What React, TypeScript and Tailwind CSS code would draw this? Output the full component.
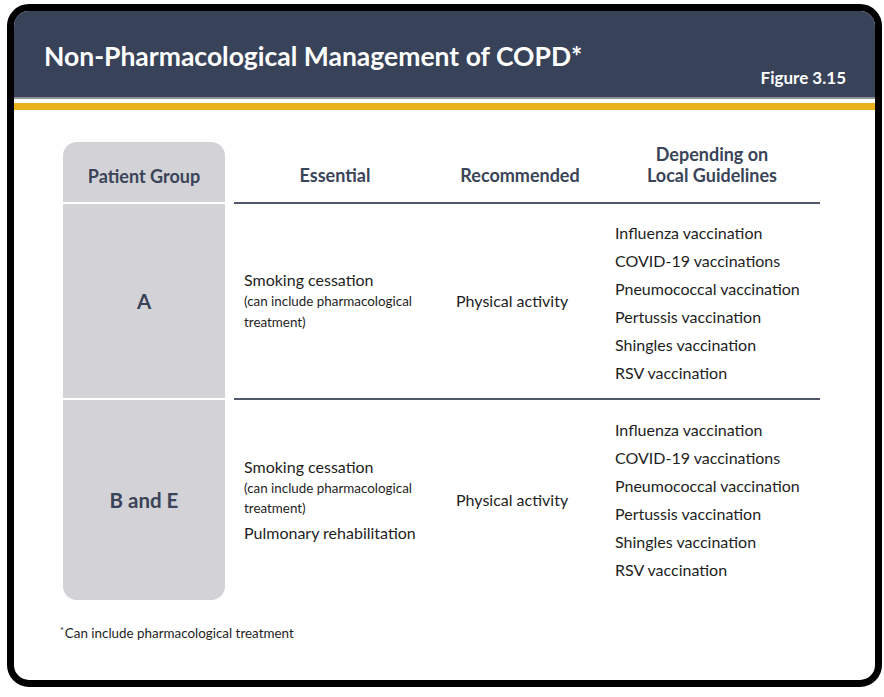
const vaccines = [
  "Influenza vaccination",
  "COVID-19 vaccinations",
  "Pneumococcal vaccination",
  "Pertussis vaccination",
  "Shingles vaccination",
  "RSV vaccination",
];

function VaccineList() {
  return (
    <ul className="flex flex-col gap-[6px]">
      {vaccines.map((v) => (
        <li key={v} className="leading-[22px]">
          {v}
        </li>
      ))}
    </ul>
  );
}

export default function App() {
  return (
    <div
      className="w-[884px] h-[697px] bg-white pt-[4px] pl-[7px]"
      style={{ fontFamily: "Lato, 'Open Sans', sans-serif" }}
    >
      <div className="w-[875px] h-[683px] border-[7px] border-black rounded-[22px] overflow-hidden bg-white flex flex-col">
        <div className="h-[86px] bg-[#384259] flex items-start justify-between pl-[30px] pr-[29px] shrink-0">
          <h1 className="text-white font-bold text-[26.5px] leading-[32px] mt-[29px]">
            Non-Pharmacological Management of COPD*
          </h1>
          <span className="text-white font-bold text-[17px] leading-[20px] mt-[57px]">
            Figure 3.15
          </span>
        </div>
        <div className="h-[2px] bg-[#8d929c] shrink-0" />
        <div className="h-[4px] bg-white shrink-0" />
        <div className="h-[7px] bg-[#e9b11c] shrink-0" />

        <div className="pl-[49px] pt-[32px] text-[#1e1e1e]">
          {/* header row */}
          <div className="flex">
            <div className="w-[162px] h-[62px] bg-[#d3d3d7] rounded-t-[14px] border-b-2 border-white flex items-end justify-center pb-[15px] font-bold text-[18px] leading-[21px] text-[#3a4459]">
              Patient Group
            </div>
            <div className="ml-[9px] w-[586px] flex border-b-2 border-[#50576a] font-bold text-[18px] leading-[21px] text-[#3a4459]">
              <div className="w-[202px] flex items-end justify-center pb-[16px]">Essential</div>
              <div className="w-[168px] flex items-end justify-center pb-[16px]">Recommended</div>
              <div className="w-[216px] flex items-end justify-center pb-[16px] text-center">
                Depending on
                <br />
                Local Guidelines
              </div>
            </div>
          </div>

          {/* group A */}
          <div className="flex">
            <div className="w-[162px] h-[196px] bg-[#d3d3d7] border-b-2 border-white flex items-center justify-center font-bold text-[20.5px] text-[#3a4459]">
              A
            </div>
            <div className="ml-[9px] w-[586px] flex items-center border-b-2 border-[#50576a] text-[16px]">
              <div className="w-[202px] pl-[10px]">
                <p className="leading-[22px]">Smoking cessation</p>
                <p className="text-[13.4px] leading-[21px]">
                  (can include pharmacological
                  <br />
                  treatment)
                </p>
              </div>
              <div className="w-[168px] pl-[20px]">Physical activity</div>
              <div className="w-[216px] pl-[11px] pt-[4px]">
                <VaccineList />
              </div>
            </div>
          </div>

          {/* group B and E */}
          <div className="flex">
            <div className="w-[162px] h-[200px] bg-[#d3d3d7] rounded-b-[14px] flex items-center justify-center font-bold text-[20.5px] text-[#3a4459]">
              B and E
            </div>
            <div className="ml-[9px] w-[586px] flex items-center text-[16px]">
              <div className="w-[202px] pl-[10px]">
                <p className="leading-[22px]">Smoking cessation</p>
                <p className="text-[13.4px] leading-[20px]">
                  (can include pharmacological
                  <br />
                  treatment)
                </p>
                <p className="leading-[22px] mt-[4px]">Pulmonary rehabilitation</p>
              </div>
              <div className="w-[168px] pl-[20px]">Physical activity</div>
              <div className="w-[216px] pl-[11px]">
                <VaccineList />
              </div>
            </div>
          </div>

          <p className="mt-[24px] ml-[-3px] text-[13.4px] leading-[18px] text-[#1e1e1e]">
            <span className="text-[9px] relative top-[-4px] mr-[1px]">*</span>Can include pharmacological treatment
          </p>
        </div>
      </div>
    </div>
  );
}
